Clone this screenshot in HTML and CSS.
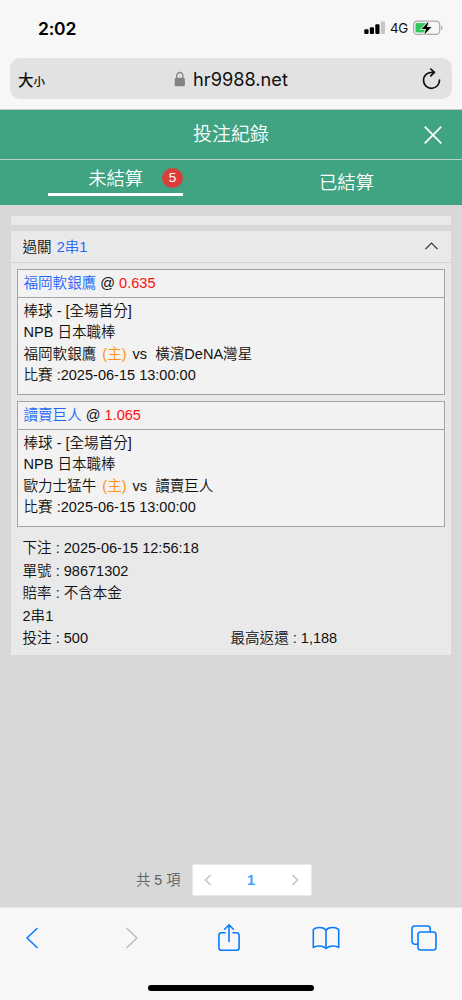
FILE: index.html
```html
<!DOCTYPE html>
<html lang="zh-Hant">
<head>
<meta charset="utf-8">
<meta name="viewport" content="width=device-width">
<title>投注紀錄</title>
<link rel="stylesheet" href="styles.css">
</head>
<body>
<div class="browser-top">
  <div class="status">
    <span class="clock">2:02</span>
    <div class="status-right">
      <svg class="signal" width="22" height="14" viewBox="0 0 22 14"><g fill="#000"><rect x="0.3" y="8.3" width="4.2" height="4.7" rx="1"/><rect x="5.8" y="6.300" width="4.2" height="6.7" rx="1"/><rect x="11.3" y="3.300" width="4.2" height="9.7" rx="1"/></g><rect x="16.800" y="0.5" width="4.2" height="12.500" rx="1" fill="#c6c6c6"/></svg>
      <span class="network">4G</span>
      <svg class="battery" width="30" height="16" viewBox="0 0 30 16"><rect x="0.7" y="1.2" width="26" height="13.2" rx="3.6" fill="none" stroke="#a9a9a9" stroke-width="1.2"/><rect x="2.5" y="3" width="13" height="9.6" rx="1.8" fill="#34c759"/><path d="M28.2 5.5v4.6q1.5-.7 1.5-2.3t-1.5-2.3z" fill="#a9a9a9"/><path d="M15.800 1.200L8.500 9h4.600l-2 5.700L18.500 7.100h-4.600z" fill="#000" stroke="#f7f7f7" stroke-width="1.6" paint-order="stroke"/></svg>
    </div>
  </div>
  <div class="address">
    <span class="text-size">大<small>小</small></span>
    <div class="host">
      <svg width="12" height="16" viewBox="0 0 12 16"><path d="M2.7 8V4.6a3.1 3.1 0 0 1 6.2 0V8" fill="none" stroke="#828286" stroke-width="1.3"/><rect x=".7" y="6.8" width="10.2" height="8.4" rx="1.5" fill="#828286"/></svg>
      <span>hr9988.net</span>
    </div>
    <svg class="reload" width="20" height="22" viewBox="0 0 20 22" fill="none" stroke="#111" stroke-width="1.7" stroke-linecap="round" stroke-linejoin="round"><path d="M17.5 12a8 8 0 1 1-8-7.7h2.7"/><path d="M8.8 1l3.6 3.4-3.6 3.5"/></svg>
  </div>
</div>
<header class="title-bar">
  <h1>投注紀錄</h1>
  <svg class="close" width="20" height="20" viewBox="0 0 20 20" stroke="#fff" stroke-width="1.7"><path d="M1.7 1.7l16.6 16.6M18.3 1.7L1.7 18.3"/></svg>
</header>
<nav class="tabs">
  <div class="tab tab-active"><div class="tab-label">未結算<span class="count">5</span></div></div>
  <div class="tab">已結算</div>
</nav>
<main class="content">
  <div class="strip"></div>
  <section class="bet">
    <div class="bet-head">
      <div>過關 <span class="blue combo">2串1</span></div>
      <svg width="13" height="8" viewBox="0 0 13 8" fill="none" stroke="#333" stroke-width="1.2"><path d="M.5 7.2l6-6 6 6"/></svg>
    </div>
    <div class="legs">
      <article class="leg">
        <div class="pick"><span class="blue">福岡軟銀鷹</span> @ <span class="red">0.635</span></div>
        <div class="match">
          <div>棒球 - [全場首分]</div>
          <div>NPB 日本職棒</div>
          <div>福岡軟銀鷹 <span class="home">(主)</span> vs&nbsp; 橫濱DeNA灣星</div>
          <div>比賽 :2025-06-15 13:00:00</div>
        </div>
      </article>
      <article class="leg">
        <div class="pick"><span class="blue">讀賣巨人</span> @ <span class="red">1.065</span></div>
        <div class="match">
          <div>棒球 - [全場首分]</div>
          <div>NPB 日本職棒</div>
          <div>歐力士猛牛 <span class="home">(主)</span> vs&nbsp; 讀賣巨人</div>
          <div>比賽 :2025-06-15 13:00:00</div>
        </div>
      </article>
    </div>
    <div class="details">
      <div>下注 : 2025-06-15 12:56:18</div>
      <div>單號 : 98671302</div>
      <div>賠率 : 不含本金</div>
      <div>2串1</div>
      <div class="amounts"><span>投注 : 500</span><span>最高返還 : 1,188</span></div>
    </div>
  </section>
  <div class="pagination">
    <span class="total">共 5 項</span>
    <div class="pages">
      <svg width="8" height="12" viewBox="0 0 8 12"><path d="M6.5 1L1.5 6l5 5"/></svg>
      <b>1</b>
      <svg width="8" height="12" viewBox="0 0 8 12"><path d="M1.5 1l5 5-5 5"/></svg>
    </div>
  </div>
</main>
<footer class="toolbar">
  <div class="tools">
    <svg width="14" height="22" viewBox="0 0 14 22"><path d="M12 1.5L2 11l10 9.5"/></svg>
    <svg class="disabled" width="14" height="22" viewBox="0 0 14 22"><path d="M2 1.5L12 11 2 20.5"/></svg>
    <svg class="share" width="24" height="30" viewBox="0 0 24 30"><path d="M8 9.8H4.5a2.6 2.6 0 0 0-2.6 2.6v12.3a2.6 2.6 0 0 0 2.6 2.6h15a2.6 2.6 0 0 0 2.6-2.6V12.4a2.6 2.6 0 0 0-2.6-2.6H16M12 18.5V2M7.7 6.2L12 1.8l4.3 4.4"/></svg>
    <svg width="28" height="24" viewBox="0 0 28 24"><path d="M14 22.5V4.2C11.5.9 4.500.6 1.300 3.600V21.500C4.500 19.300 11 19.300 14 22.500C17 19.300 23.500 19.300 26.700 21.500V3.600C23.500.6 16.500.9 14 4.200"/></svg>
    <svg width="26" height="26" viewBox="0 0 26 26"><rect x="7" y="7" width="18" height="18" rx="2.8"/><path d="M6.800 19.200H3.800A2.800 2.800 0 0 1 1 16.400V3.800A2.800 2.800 0 0 1 3.800 1h12.600a2.800 2.800 0 0 1 2.800 2.800v3"/></svg>
  </div>
  <div class="home-indicator"></div>
</footer>
</body>
</html>
```
FILE: styles.css
```css
* { box-sizing: border-box; }
body {
  margin: 0;
  width: 462px;
  height: 1000px;
  overflow: hidden;
  display: flex;
  flex-direction: column;
  background: #d8d8d8;
  color: #111;
  font: 14.55px "Liberation Sans", "Noto Sans CJK TC", sans-serif;
  font-weight: 350;
}
svg { display: block; flex: none; }
.browser-top {
  height: 110px;
  padding: 0 10px;
  background: #f7f7f7;
  border-bottom: 1px solid #c4c8c6;
  font-family: Inter, "Noto Sans CJK TC", sans-serif;
}
.status {
  height: 58px;
  padding: 0 9px 2px 28px;
  display: flex;
  align-items: center;
  justify-content: space-between;
}
.clock { font-size: 17.5px; font-weight: 600; color: #000; letter-spacing: -0.2px; }
.status-right { display: flex; align-items: center; }
.network { margin: 0 5px 0 4px; font-size: 13.3px; font-weight: 400; letter-spacing: -0.3px; }
.address {
  height: 41px;
  padding: 0 10px 0 8px;
  border-radius: 10px;
  background: #e2e2e2;
  display: grid;
  grid-template-columns: 1fr auto 1fr;
  align-items: center;
}
.text-size { font-size: 15.5px; font-weight: 500; }
.text-size small { font-size: 11.5px; }
.host { padding-left: 2px; display: flex; align-items: center; gap: 7px; font-size: 18.2px; font-weight: 400; }
.reload { justify-self: end; }
.title-bar {
  height: 50px;
  padding: 0 19px;
  display: grid;
  grid-template-columns: 1fr auto 1fr;
  align-items: center;
  background: #40a382;
  border-bottom: 1px solid #b9d2c8;
  color: #fff;
}
.title-bar h1 { grid-column: 2; margin: 0; font-size: 19px; font-weight: 350; line-height: 48px; }
.close { justify-self: end; }
.tabs { height: 45px; display: grid; grid-template-columns: 1fr 1fr; background: #40a382; color: #fff; font-size: 18.3px; }
.tab { line-height: 45px; text-align: center; }
.tab-label {
  width: 135px;
  height: 36px;
  margin: 0 auto;
  padding-top: 3px;
  border-bottom: 3px solid #fff;
  display: flex;
  align-items: center;
  justify-content: flex-end;
  gap: 19px;
  line-height: 33px;
}
.count { width: 21px; height: 20px; border-radius: 50%; background: #db3e3a; font-size: 13.5px; line-height: 20px; text-align: center; }
.content { flex: 1; padding: 11px 11px 0; display: flex; flex-direction: column; }
.strip { height: 9px; background: #e9e9e9; }
.bet { height: 424px; margin-top: 6px; background: #e9e9e9; }
.bet-head {
  height: 32px;
  padding: 0 13px 2px 11.5px;
  border-bottom: 1px solid #d2d2d2;
  display: flex;
  align-items: center;
  justify-content: space-between;
}
.combo { margin-left: 1px; }
.blue { color: #1f68fa; }
.red { color: #fb1010; }
.home { margin: 0 2px; color: #ff930f; }
.legs { padding: 6px; display: grid; gap: 6px; }
.leg { height: 126px; border: 1px solid #a3a3a3; background: #f2f2f2; }
.pick { height: 28px; padding-left: 5.5px; border-bottom: 1px solid #a3a3a3; line-height: 27px; }
.match { padding: 3px 0 0 5.5px; line-height: 21.3px; }
.match > div { height: 21.3px; white-space: nowrap; }
.details { padding: 4px 11.5px 0; line-height: 22.5px; }
.details > div { height: 22.5px; }
.amounts { display: grid; grid-template-columns: 208px 1fr; }
.pagination { margin: auto 0 11px; padding-left: 125px; display: flex; align-items: center; gap: 11px; color: #606266; }
.total { padding-bottom: 3px; font-size: 14.3px; }
.pages {
  width: 120px;
  height: 32px;
  padding: 0 12px 0 11px;
  background: #fff;
  border: 1px solid #e8e8e8;
  display: flex;
  align-items: center;
  justify-content: space-between;
}
.pages b { color: #409eff; font-size: 14.6px; font-weight: 700; }
.pages svg { fill: none; stroke: #c0c4cc; stroke-width: 1.5; }
.toolbar { height: 93px; background: #f7f7f7; border-top: 1px solid #e6e6e6; }
.tools {
  height: 59px;
  padding: 0 25px 0 19px;
  display: grid;
  grid-template-columns: repeat(5, 26px);
  align-items: center;
  justify-content: space-between;
  justify-items: center;
}
.tools svg { fill: none; stroke: #087cff; stroke-width: 1.6; stroke-linecap: round; stroke-linejoin: round; }
.tools .disabled { margin-left: 4px; stroke: #bdbdbd; }
.tools .share { margin-left: 1px; }
.home-indicator { width: 166px; height: 6px; margin: 18px auto 0; border-radius: 3px; background: #000; }
```
